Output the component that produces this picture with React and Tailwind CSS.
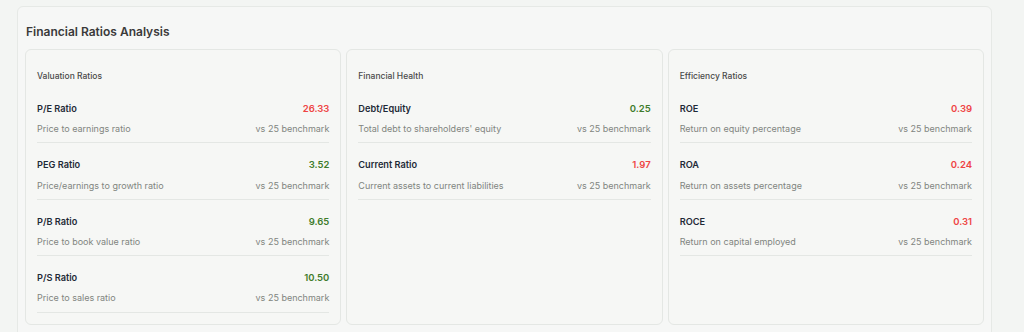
import React from 'react';

const groups = [
  {
    title: 'Valuation Ratios',
    items: [
      { name: 'P/E Ratio', desc: 'Price to earnings ratio', value: '26.33', good: false },
      { name: 'PEG Ratio', desc: 'Price/earnings to growth ratio', value: '3.52', good: true },
      { name: 'P/B Ratio', desc: 'Price to book value ratio', value: '9.65', good: true },
      { name: 'P/S Ratio', desc: 'Price to sales ratio', value: '10.50', good: true },
    ],
  },
  {
    title: 'Financial Health',
    items: [
      { name: 'Debt/Equity', desc: "Total debt to shareholders' equity", value: '0.25', good: true },
      { name: 'Current Ratio', desc: 'Current assets to current liabilities', value: '1.97', good: false },
    ],
  },
  {
    title: 'Efficiency Ratios',
    items: [
      { name: 'ROE', desc: 'Return on equity percentage', value: '0.39', good: false },
      { name: 'ROA', desc: 'Return on assets percentage', value: '0.24', good: false },
      { name: 'ROCE', desc: 'Return on capital employed', value: '0.31', good: false },
    ],
  },
];

const RatioRow = ({ item }) => (
  <div className="pt-[14px] pb-[5.4px] border-b border-[#e4e7e4]">
    <div className="flex justify-between items-center h-4">
      <span className="text-[9.2px] font-semibold text-[#1f2a37]">{item.name}</span>
      <span className={`text-[9.5px] font-semibold ${item.good ? 'text-[#3f7c2c]' : 'text-[#ef4444]'}`}>{item.value}</span>
    </div>
    <div className="flex justify-between items-center h-4 mt-1 text-[9px] text-[#81857f]">
      <span>{item.desc}</span>
      <span>vs 25 benchmark</span>
    </div>
  </div>
);

const App = () => {
  return (
    <div className="w-[1024px] h-[332px] overflow-hidden bg-[#f3f5f3] pt-[6px] pl-[17px]" style={{ fontFamily: 'Inter, "Noto Sans", sans-serif' }}>
      <div className="w-[975px] h-[340px] bg-[#f6f7f6] border border-[#e6e9e6] rounded-md px-[7px] pt-[15px]">
        <h2 className="text-[12px] font-semibold text-[#3a3a3a] leading-5 ml-[1px]">Financial Ratios Analysis</h2>
        <div className="grid grid-cols-3 gap-[5px] mt-[7px]">
          {groups.map((g) => (
            <div key={g.title} className="h-[276px] bg-[#f6f7f5] border border-[#e4e7e4] rounded-md px-[11px] pt-[19px]">
              <h3 className="text-[8.5px] font-medium text-[#4a4a4a] leading-[14px]">{g.title}</h3>
              <div className="mt-[4px]">
                {g.items.map((it) => (
                  <RatioRow key={it.name} item={it} />
                ))}
              </div>
            </div>
          ))}
        </div>
      </div>
    </div>
  );
};

export default App;
